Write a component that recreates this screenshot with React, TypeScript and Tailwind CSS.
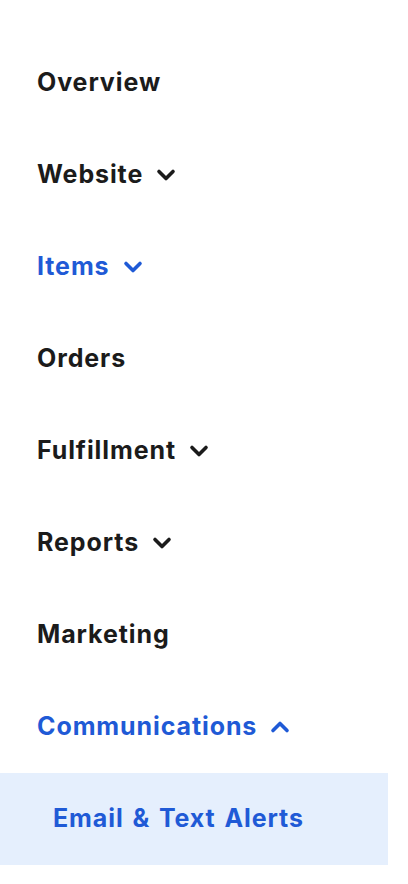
import React from "react";

function Chevron({ up }: { up?: boolean }) {
  return (
    <svg width="20" height="14" viewBox="0 0 20 14" className="ml-[13px]" aria-hidden>
      <path
        d={up ? "M3 10.5 L10 3.5 L17 10.5" : "M3 3.5 L10 10.5 L17 3.5"}
        fill="none"
        stroke="currentColor"
        strokeWidth="3.6"
        strokeLinecap="round"
        strokeLinejoin="round"
      />
    </svg>
  );
}

type Item = { label: string; chevron?: "down" | "up"; active?: boolean };

const items: Item[] = [
  { label: "Overview" },
  { label: "Website", chevron: "down" },
  { label: "Items", chevron: "down", active: true },
  { label: "Orders" },
  { label: "Fulfillment", chevron: "down" },
  { label: "Reports", chevron: "down" },
  { label: "Marketing" },
  { label: "Communications", chevron: "up", active: true },
];

export default function App() {
  return (
    <div
      className="w-[408px] h-[884px] bg-white pt-[37px]"
      style={{ fontFamily: "Inter, 'Liberation Sans', sans-serif" }}
    >
      <nav className="w-[388px] flex flex-col">
        {items.map((it) => (
          <div
            key={it.label}
            className={`h-[92px] flex items-center pl-[37px] text-[25px] font-bold tracking-[0.9px] [word-spacing:2px] ${
              it.active ? "text-[#1f5ad6]" : "text-[#1b1b1b]"
            }`}
          >
            <span>{it.label}</span>
            {it.chevron && <Chevron up={it.chevron === "up"} />}
          </div>
        ))}
        <div className="h-[92px] flex items-center pl-[53px] bg-[#e5effd] text-[25px] font-bold tracking-[0.9px] [word-spacing:2px] text-[#1f5ad6]">
          Email &amp; Text Alerts
        </div>
      </nav>
    </div>
  );
}
